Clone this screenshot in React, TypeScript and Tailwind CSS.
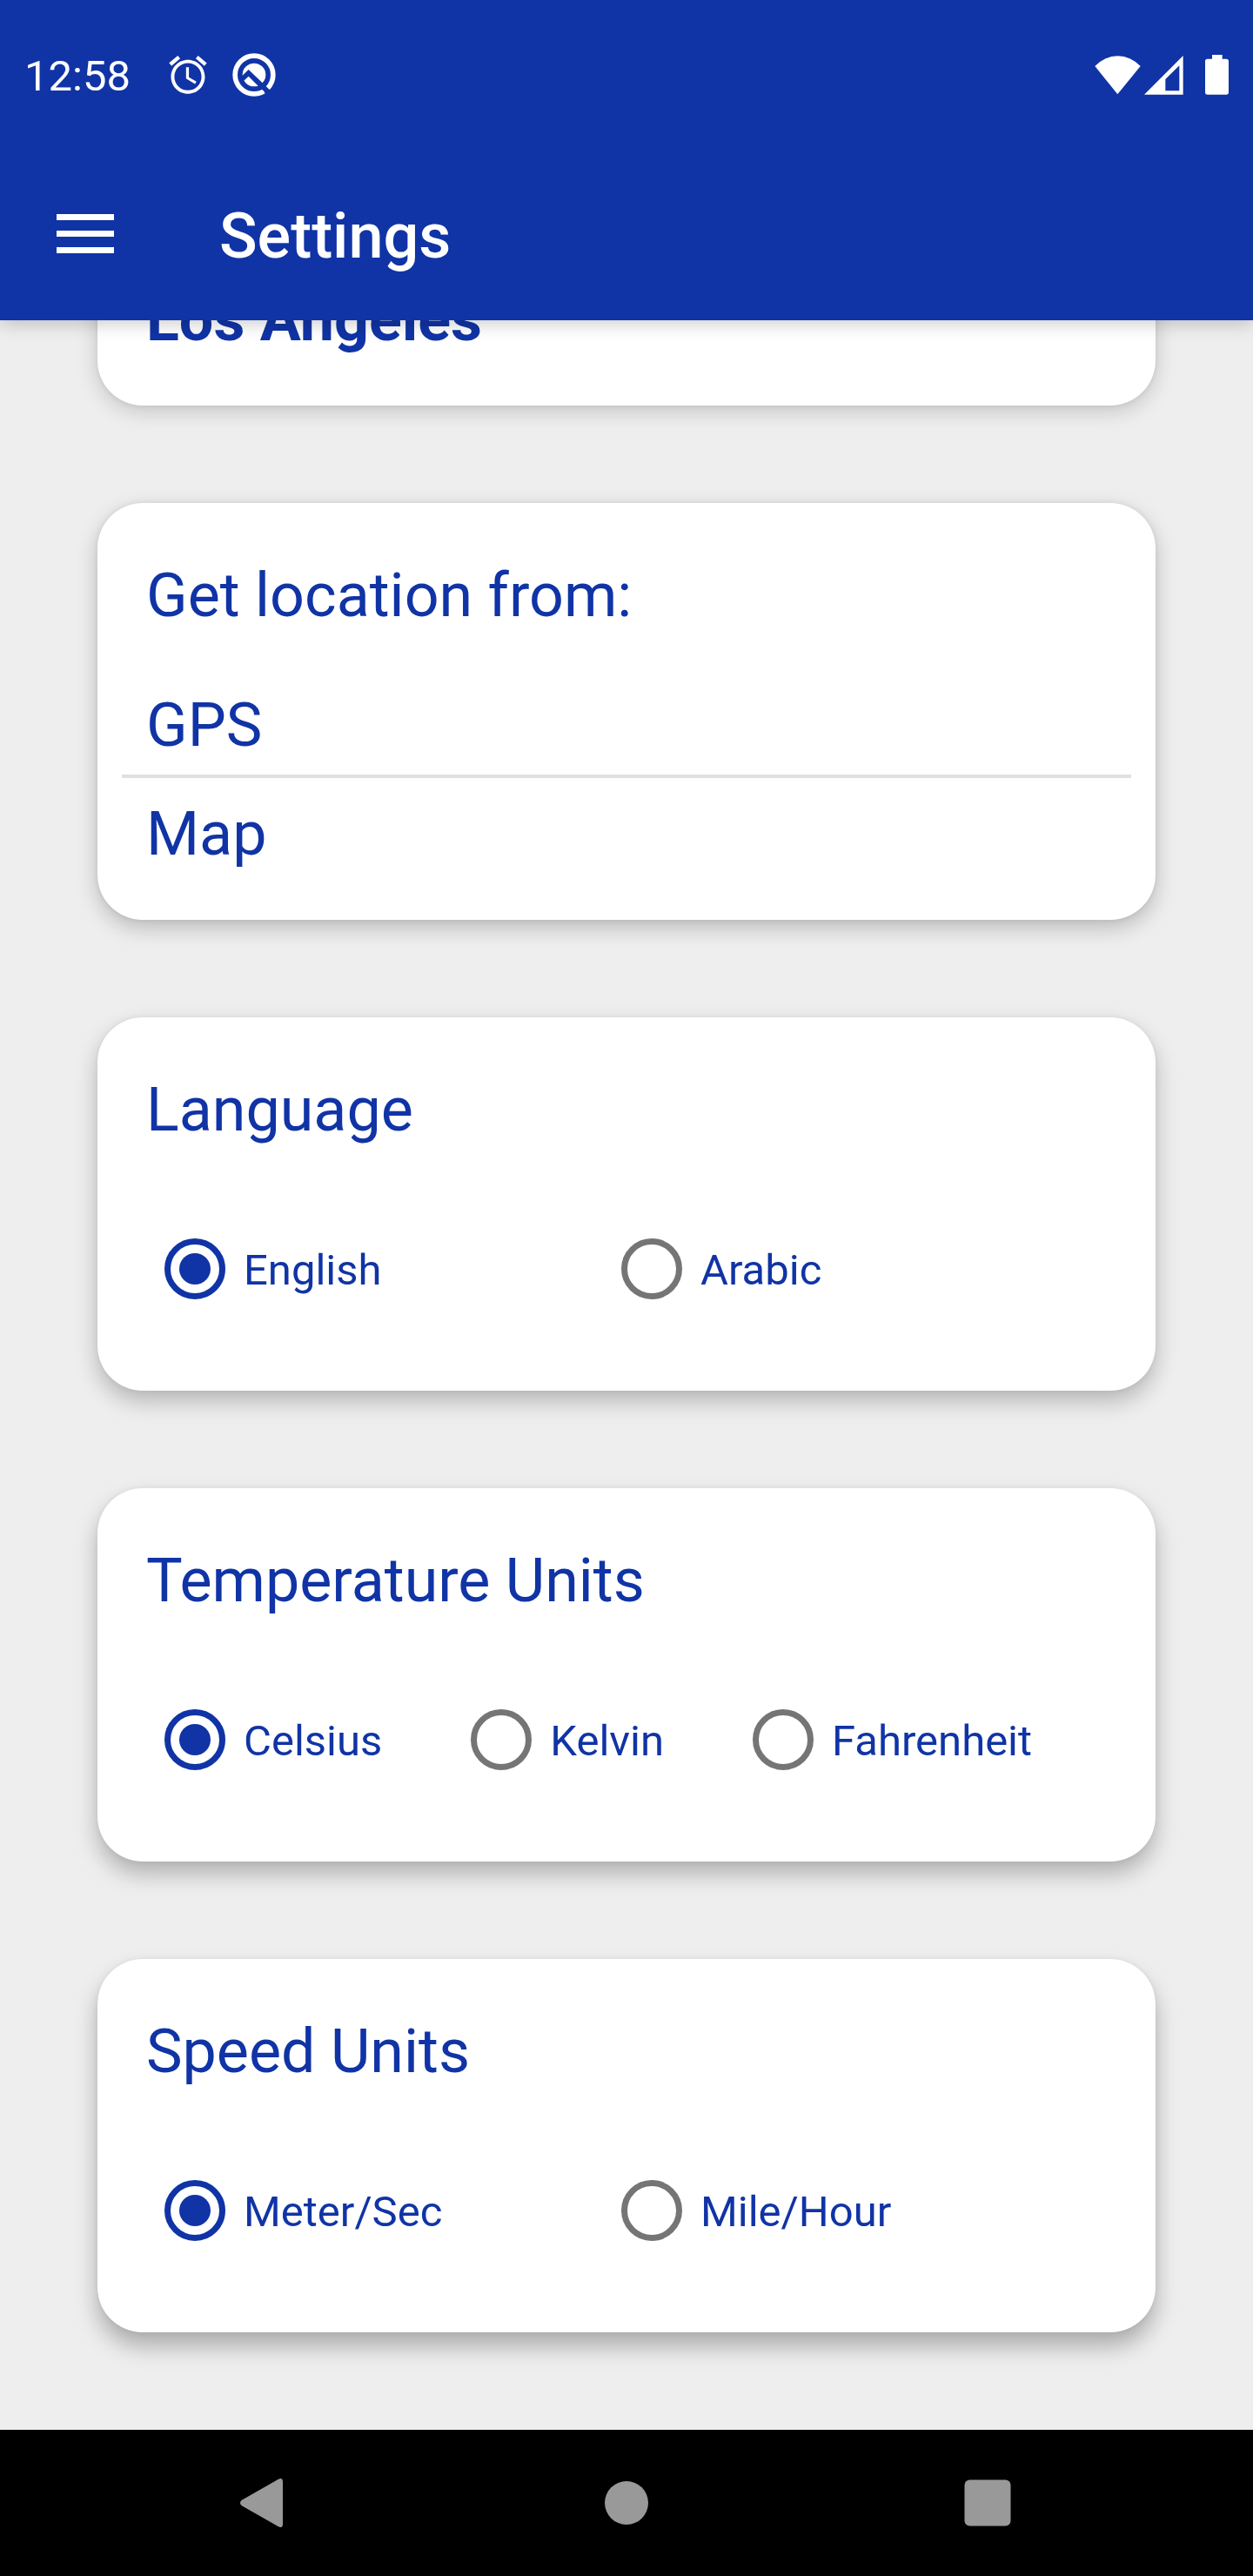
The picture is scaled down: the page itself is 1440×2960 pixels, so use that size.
import { useState, type ReactNode } from 'react';

function AlarmIcon() {
  return (
    <svg viewBox="0 0 24 24" className="size-[52px]" fill="currentColor" aria-hidden="true">
      <path d="M22 5.72l-4.6-3.86-1.29 1.53 4.6 3.86L22 5.72zM7.88 3.39L6.6 1.86 2 5.71l1.29 1.53 4.59-3.85zM12.5 8H11v6l4.75 2.85.75-1.23-4-2.37V8zM12 4c-4.97 0-9 4.03-9 9s4.02 9 9 9c4.97 0 9-4.03 9-9s-4.03-9-9-9zm0 16.2c-3.98 0-7.2-3.22-7.2-7.2S8.02 5.8 12 5.8s7.2 3.22 7.2 7.2-3.22 7.2-7.2 7.2z" />
    </svg>
  );
}

function BadgeIcon() {
  return (
    <svg viewBox="0 0 156 156" className="size-[52px]" aria-hidden="true">
      <circle cx="78" cy="78" r="65.5" fill="none" stroke="#fff" strokeWidth="17" />
      <circle cx="78" cy="78" r="40" fill="#fff" />
      <path d="M34 84 L59 60 L146 143 L122 156 L112 134 L98 122 L59 83 L36 104 Z" fill="#1034a6" />
    </svg>
  );
}

function WifiIcon() {
  return (
    <svg viewBox="0 0 159 135" className="h-[45px] w-[53px]" fill="currentColor" aria-hidden="true">
      <path d="M79 133 L1 36 A105.5 105.5 0 0 1 158 36 Z" />
    </svg>
  );
}

function SignalIcon() {
  return (
    <svg viewBox="0 0 135 135" className="size-[45px]" fill="currentColor" aria-hidden="true">
      <path fillRule="evenodd" d="M0 134 H134 V0 Z M73 81 L121 34 V121 H73 Z" />
    </svg>
  );
}

function BatteryIcon() {
  return (
    <svg viewBox="0 0 81 138" className="h-[46px] w-[27px]" fill="currentColor" aria-hidden="true">
      <path d="M24 0 H59 V14 H73 Q81 14 81 22 V129 Q81 137 73 137 H8 Q0 137 0 129 V22 Q0 14 8 14 H24 Z" />
    </svg>
  );
}

function StatusBar() {
  return (
    <div className="flex h-[172px] items-center px-7">
      <span className="pt-1 text-[49px] leading-[58px]">12:58</span>
      <div className="ml-10 flex items-center gap-6">
        <AlarmIcon />
        <BadgeIcon />
      </div>
      <div className="ml-auto flex items-center">
        <WifiIcon />
        <span className="ml-1">
          <SignalIcon />
        </span>
        <span className="ml-[25px]">
          <BatteryIcon />
        </span>
      </div>
    </div>
  );
}

function Toolbar() {
  return (
    <div className="flex h-[196px] items-center px-[65px]">
      <button type="button" aria-label="Open menu" className="flex flex-col gap-3 pb-[3px]">
        <span className="h-[7px] w-[66px] bg-white" />
        <span className="h-[7px] w-[66px] bg-white" />
        <span className="h-[7px] w-[66px] bg-white" />
      </button>
      <h1 className="ml-[121px] pt-1 text-[72px] leading-[82px] font-medium">Settings</h1>
    </div>
  );
}

function Card({ shadow, children }: { shadow: string; children: ReactNode }) {
  return (
    <section className={`rounded-[52px] bg-white px-7 pt-[65px] text-[#1034a6] ${shadow}`}>
      {children}
    </section>
  );
}

type RadioCardProps = {
  title: string;
  name: string;
  options: string[];
  shadow: string;
};

function RadioCard({ title, name, options, shadow }: RadioCardProps) {
  const [value, setValue] = useState(options[0]);
  const columns =
    options.length === 2 ? 'grid grid-cols-2 pr-[61px]' : 'flex flex-wrap gap-x-[102px]';
  return (
    <Card shadow={shadow}>
      <h2 id={name} className="px-7 text-[70px] leading-[82px]">
        {title}
      </h2>
      <div
        role="radiogroup"
        aria-labelledby={name}
        className={`mt-[107px] pb-[105px] pl-[49px] ${columns}`}
      >
        {options.map((option) => (
          <label key={option} className="flex items-center gap-[21px]">
            <input
              type="radio"
              name={name}
              value={option}
              checked={value === option}
              onChange={() => setValue(option)}
              className="size-[70px] shrink-0 appearance-none rounded-full border-[7px] border-[#757575] bg-clip-content p-[10px] checked:border-[#1034a6] checked:bg-[#1034a6]"
            />
            <span className="pt-1 text-[49px] leading-[58px]">{option}</span>
          </label>
        ))}
      </div>
    </Card>
  );
}

function NavigationBar() {
  return (
    <nav className="grid h-[168px] grid-cols-3 place-items-center bg-black px-24 text-[#999999]">
      <button type="button" aria-label="Back">
        <svg viewBox="0 0 56 56" className="size-14" fill="currentColor">
          <path d="M1.5 25 L44 0.8 Q49 -1.5 49 4 V52 Q49 57.5 44 55.2 L1.5 31 Q-1.5 28 1.5 25 Z" />
        </svg>
      </button>
      <button type="button" aria-label="Home">
        <svg viewBox="0 0 56 56" className="size-14" fill="currentColor">
          <circle cx="28" cy="28" r="25" />
        </svg>
      </button>
      <button type="button" aria-label="Recent apps">
        <svg viewBox="0 0 56 56" className="size-14" fill="currentColor">
          <rect x="0.5" y="1.5" width="53" height="53" rx="6" />
        </svg>
      </button>
    </nav>
  );
}

export default function App() {
  return (
    <div className="flex min-h-screen flex-col bg-[#eeeeee] font-[Roboto,sans-serif]">
      <header className="relative z-10 bg-[#1034a6] text-white shadow-[0_3px_20px_rgba(0,0,0,0.22)]">
        <StatusBar />
        <Toolbar />
      </header>

      <main className="-mt-[107px] flex flex-1 flex-col gap-28 px-28 pb-28">
        <Card shadow="shadow-[0_6px_24px_rgba(0,0,0,0.18),0_0_6px_rgba(0,0,0,0.08)]">
          <p className="px-7 pb-[58px] text-[70px] leading-[82px] font-bold">Los Angeles</p>
        </Card>

        <Card shadow="shadow-[0_9px_25px_rgba(0,0,0,0.22),0_0_6px_rgba(0,0,0,0.08)]">
          <h2 className="px-7 text-[70px] leading-[82px]">Get location from:</h2>
          <button
            type="button"
            className="mt-[67px] block w-full border-b-4 border-[#e0e0e0] px-7 pb-4 text-left text-[70px] leading-[82px]"
          >
            GPS
          </button>
          <button
            type="button"
            className="block w-full px-7 pt-[23px] pb-[58px] text-left text-[70px] leading-[82px]"
          >
            Map
          </button>
        </Card>

        <RadioCard
          title="Language"
          name="language"
          options={['English', 'Arabic']}
          shadow="shadow-[0_12px_26px_rgba(0,0,0,0.24),0_0_6px_rgba(0,0,0,0.06)]"
        />
        <RadioCard
          title="Temperature Units"
          name="temperature"
          options={['Celsius', 'Kelvin', 'Fahrenheit']}
          shadow="shadow-[0_14px_26px_rgba(0,0,0,0.26),0_0_6px_rgba(0,0,0,0.06)]"
        />
        <RadioCard
          title="Speed Units"
          name="speed"
          options={['Meter/Sec', 'Mile/Hour']}
          shadow="shadow-[0_16px_26px_rgba(0,0,0,0.28),0_0_6px_rgba(0,0,0,0.06)]"
        />
      </main>

      <NavigationBar />
    </div>
  );
}
